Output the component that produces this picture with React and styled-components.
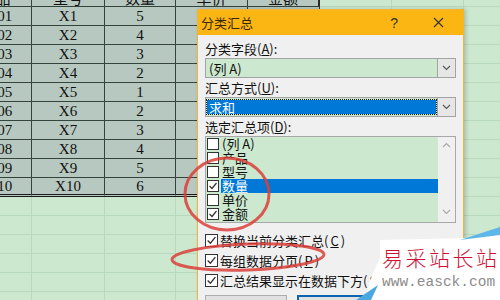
import React from "react"
import styled, { createGlobalStyle } from "styled-components"

const Global = createGlobalStyle`
  html, body { margin: 0; padding: 0; }
  body { background: #cce8cf; }
`

const Page = styled.div`
  position: relative;
  width: 500px;
  height: 300px;
  overflow: hidden;
  background: #cce8cf;
  font-family: "Noto Sans CJK SC", "Liberation Sans", sans-serif;
`

/* ---------- worksheet ---------- */
const Sheet = styled.div`
  display: grid;
  grid-template-columns: 72px 73px 71px 72px 72px 72px 72px 72px;
  grid-auto-rows: 19px;
  margin: -12px 0 0 -40px;
`

const Cell = styled.div`
  box-sizing: border-box;
  display: flex;
  align-items: center;
  justify-content: center;
  font-family: "Liberation Serif", "Noto Sans CJK SC", serif;
  font-size: 15px;
  color: #111;
  background: ${p => (p.$data ? "#b7c8c0" : "#cce8cf")};
  border-right: 1px solid ${p => (p.$data ? "#34433b" : "#b9d9bd")};
  border-bottom: ${p => (p.$last ? "3px double #1b1b1b" : `1px solid ${p.$data ? "#34433b" : "#b9d9bd"}`)};
  ${p => p.$edge && "border-right: 2px solid #2a2a2a;"}
`

const header = ["产品", "型号", "数量", "单价", "金额"]
const qty = [5, 4, 3, 2, 1, 2, 3, 4, 5, 6]
const COLS = 8
const ROWS = 17

const Worksheet = () => {
  const cells = []
  for (let r = 0; r < ROWS; r++) {
    for (let c = 0; c < COLS; c++) {
      const data = r <= 10 && c < 5
      let text = ""
      if (data && r === 0) text = header[c]
      else if (data) {
        const n = String(r).padStart(2, "0")
        text = c === 0 ? "CP" + n : c === 1 ? "X" + r : c === 2 ? qty[r - 1] : ""
      }
      cells.push(
        <Cell key={r + "-" + c} $data={data} $last={data && r === 10} $edge={r === 0 && c === 4}>
          {text}
        </Cell>
      )
    }
  }
  return <Sheet>{cells}</Sheet>
}

/* ---------- dialog ---------- */
const Dialog = styled.div`
  position: absolute;
  left: 197px;
  top: 9px;
  width: 267px;
  height: 300px;
  box-sizing: border-box;
  border: 1px solid #f0b43a;
  background: #f0f0f0;
  box-shadow: 2px 0 4px rgba(0, 0, 0, 0.18);
`

const TitleBar = styled.div`
  height: 25px;
  background: #fcb614;
  display: flex;
  align-items: center;
  padding: 0 19px 0 3px;
  font-size: 13px;
  color: #3b2800;
`

const TitleText = styled.span`
  flex: 1;
`

const Help = styled.span`
  font-family: "Liberation Sans", sans-serif;
  font-size: 14px;
  color: #333;
  margin-right: 35px;
`

const Body = styled.div`
  padding: 4px 7px 0 7px;
  display: flex;
  flex-direction: column;
`

const Label = styled.div`
  height: 19px;
  line-height: 19px;
  font-size: 13px;
  color: #111;
  white-space: nowrap;
  u { text-decoration: underline; }
`

const Combo = styled.div`
  height: 20px;
  box-sizing: border-box;
  border: 1px solid #a3a3a3;
  background: #cce8cf;
  display: flex;
`

const ComboValue = styled.div`
  flex: 1;
  display: flex;
  align-items: center;
  font-size: 13px;
  ${p =>
    p.$selected
      ? `margin: 2px 1px 2px 1px; padding-left: 2px; background: #0078d7; color: #fff; outline: 1px dotted #1b1b1b;`
      : `padding-left: 3px; color: #111;`}
`

const DropButton = styled.div`
  width: 17px;
  border-left: 1px solid #a3a3a3;
  background: #e6e6e6;
  display: flex;
  align-items: center;
  justify-content: center;
`

const Chevron = ({ up, color = "#555" }) => (
  <svg width="9" height="6" viewBox="0 0 9 6">
    <polyline
      points={up ? "1,5 4.5,1.5 8,5" : "1,1 4.5,4.5 8,1"}
      fill="none"
      stroke={color}
      strokeWidth="1.1"
    />
  </svg>
)

const ListBox = styled.div`
  height: 87px;
  box-sizing: border-box;
  border: 1px solid #a8a8a8;
  background: #cce8cf;
  display: flex;
`

const ListItems = styled.div`
  flex: 1;
  display: flex;
  flex-direction: column;
`

const Scroll = styled.div`
  width: 17px;
  background: #f0f0f0;
  display: flex;
  flex-direction: column;
  justify-content: space-between;
  align-items: center;
  padding: 5px 0 7px;
`

const ListRow = styled.div`
  height: 14px;
  display: flex;
  align-items: center;
  padding-left: 1px;
`

const ItemText = styled.div`
  flex: 1;
  height: 14px;
  line-height: 14px;
  margin-left: 2px;
  padding-left: 1px;
  font-size: 13px;
  color: ${p => (p.$active ? "#fff" : "#111")};
  background: ${p => (p.$active ? "#0078d7" : "transparent")};
`

const Box = styled.div`
  width: ${p => p.$size}px;
  height: ${p => p.$size}px;
  box-sizing: border-box;
  border: 1px solid #333;
  background: #fff;
  display: flex;
  align-items: center;
  justify-content: center;
  flex-shrink: 0;
`

const Check = ({ on, size = 12 }) => (
  <Box $size={size}>
    {on && (
      <svg width={size - 2} height={size - 2} viewBox="0 0 10 10">
        <polyline points="1.5,5 4,7.5 8.5,2" fill="none" stroke="#333" strokeWidth="1.2" />
      </svg>
    )}
  </Box>
)

const Options = styled.div`
  margin-top: 7px;
  display: flex;
  flex-direction: column;
`

const OptionRow = styled.div`
  height: 20px;
  display: flex;
  align-items: center;
  gap: 2px;
  font-size: 13px;
  color: #111;
  white-space: nowrap;
`

const Buttons = styled.div`
  margin-top: 5px;
  display: flex;
  gap: 10px;
`

const Button = styled.div`
  width: ${p => (p.$primary ? "80px" : "82px")};
  height: 23px;
  box-sizing: border-box;
  border: ${p => (p.$primary ? "2px solid #0a64b4" : "1px solid #adadad")};
  background: #e1e1e1;
  font-size: 13px;
  display: flex;
  align-items: center;
  justify-content: center;
`

const items = [
  { t: "(列 A)", on: false },
  { t: "产品", on: false },
  { t: "型号", on: false },
  { t: "数量", on: true, active: true },
  { t: "单价", on: false },
  { t: "金额", on: true },
]

const SubtotalDialog = () => (
  <Dialog>
    <TitleBar>
      <TitleText>分类汇总</TitleText>
      <Help>?</Help>
      <svg width="11" height="11" viewBox="0 0 11 11">
        <path d="M1 1 L10 10 M10 1 L1 10" stroke="#333" strokeWidth="1.1" />
      </svg>
    </TitleBar>
    <Body>
      <Label>分类字段(<u>A</u>):</Label>
      <Combo>
        <ComboValue>(列 A)</ComboValue>
        <DropButton><Chevron /></DropButton>
      </Combo>
      <Label>汇总方式(<u>U</u>):</Label>
      <Combo>
        <ComboValue $selected>求和</ComboValue>
        <DropButton><Chevron /></DropButton>
      </Combo>
      <Label>选定汇总项(<u>D</u>):</Label>
      <ListBox>
        <ListItems>
          {items.map(it => (
            <ListRow key={it.t}>
              <Check on={it.on} />
              <ItemText $active={it.active}>{it.t}</ItemText>
            </ListRow>
          ))}
        </ListItems>
        <Scroll>
          <Chevron up color="#a8a8a8" />
          <Chevron color="#a8a8a8" />
        </Scroll>
      </ListBox>
      <Options>
        <OptionRow><Check on size={13} />替换当前分类汇总(<u>C</u>)</OptionRow>
        <OptionRow><Check on size={13} />每组数据分页(<u>P</u>)</OptionRow>
        <OptionRow><Check on size={13} />汇总结果显示在数据下方(<u>S</u>)</OptionRow>
      </Options>
      <Buttons>
        <Button>全部删除(R)</Button>
        <Button $primary>确定</Button>
      </Buttons>
    </Body>
  </Dialog>
)

/* ---------- annotations ---------- */
const Marks = styled.svg`
  position: absolute;
  left: 0;
  top: 0;
  pointer-events: none;
`

const Watermark = styled.div`
  position: absolute;
  left: 355px;
  top: 225px;
  width: 145px;
  height: 75px;
`

const WmBack = styled.svg`
  position: absolute;
  left: 0;
  top: 0;
`

const WmText = styled.div`
  position: relative;
  padding: 19px 0 0 27px;
  display: flex;
  flex-direction: column;
`

const WmTitle = styled.div`
  font-family: "Noto Sans CJK SC", serif;
  font-weight: 300;
  font-size: 21px;
  line-height: 26px;
  letter-spacing: 2.5px;
  color: #cc1133;
  white-space: nowrap;
`

const WmUrl = styled.div`
  font-family: "Liberation Mono", monospace;
  font-size: 14.5px;
  line-height: 18px;
  margin-top: 3px;
  color: #8c8c8c;
  white-space: nowrap;
`

export default function App() {
  return (
    <Page>
      <Global />
      <Worksheet />
      <SubtotalDialog />
      <Marks width="500" height="300" viewBox="0 0 500 300">
        <ellipse cx="227" cy="194" rx="42" ry="36" fill="none" stroke="#d9403a" strokeWidth="3" opacity="0.85" />
        <ellipse
          cx="248"
          cy="257"
          rx="76"
          ry="13"
          transform="rotate(-2 248 257)"
          fill="none"
          stroke="#d9403a"
          strokeWidth="3"
          opacity="0.85"
        />
      </Marks>
      <Watermark>
        <WmBack width="145" height="75" viewBox="0 0 145 75">
          <polygon points="25,15 115,13 145,6 145,75 10,75 17,50 25,33" fill="#ffffff" />
          <polygon points="105,15 145,2 145,10" fill="#5fb6e8" />
          <polygon points="1,75 23,60 16,75" fill="#4aa8e0" />
        </WmBack>
        <WmText>
          <WmTitle>易采站长站</WmTitle>
          <WmUrl>www.easck.com</WmUrl>
        </WmText>
      </Watermark>
    </Page>
  )
}
